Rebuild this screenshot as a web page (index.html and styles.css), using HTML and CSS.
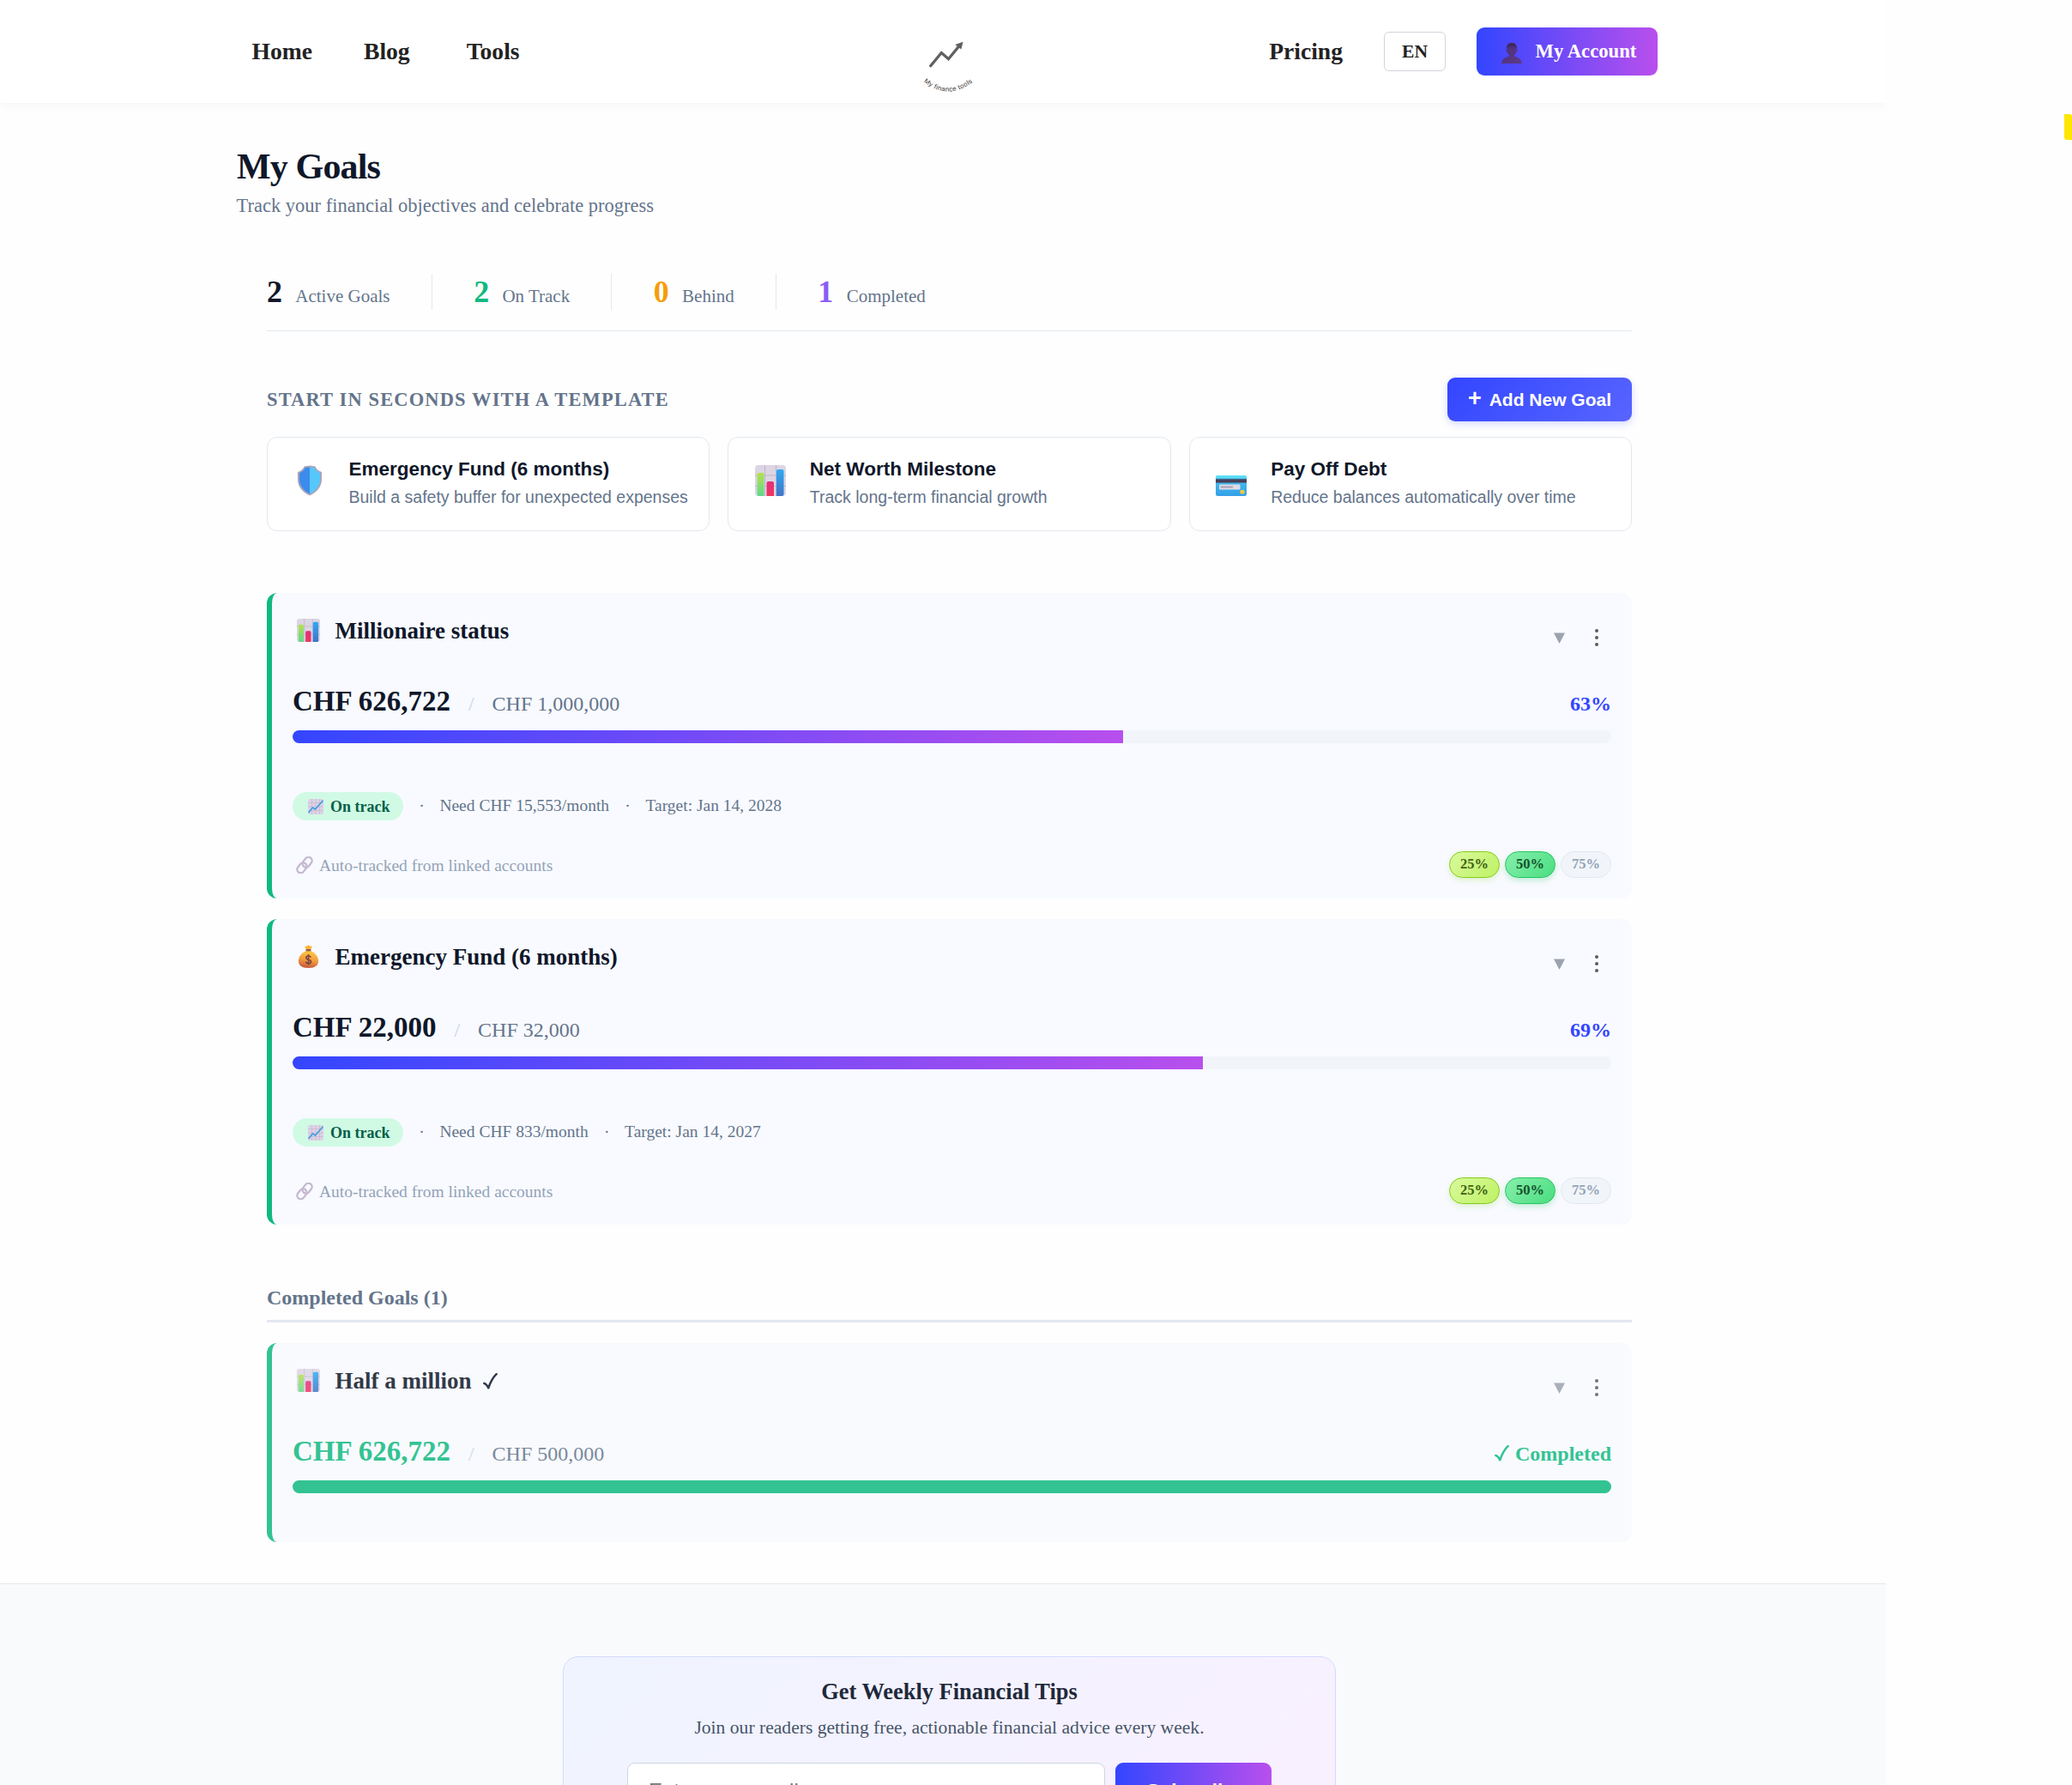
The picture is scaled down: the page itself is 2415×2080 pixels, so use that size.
FILE: index.html
```html
<!DOCTYPE html>
<html lang="en">
<head>
<meta charset="utf-8">
<title>My Goals</title>
<link rel="stylesheet" href="styles.css">
</head>
<body>
<svg class="sprite" width="0" height="0" aria-hidden="true">
  <defs>
    <linearGradient id="gGreen" x1="0" y1="0" x2="0" y2="1"><stop offset="0" stop-color="#b5e04d"/><stop offset="1" stop-color="#5fd98c"/></linearGradient>
    <linearGradient id="gPink" x1="0" y1="0" x2="0" y2="1"><stop offset="0" stop-color="#e0307c"/><stop offset="1" stop-color="#f0355f"/></linearGradient>
    <linearGradient id="gBlue" x1="0" y1="0" x2="0" y2="1"><stop offset="0" stop-color="#2fa9f5"/><stop offset="1" stop-color="#3f74c9"/></linearGradient>
    <linearGradient id="gCard" x1="0" y1="0" x2="0" y2="1"><stop offset="0" stop-color="#45c6ee"/><stop offset="1" stop-color="#359fe8"/></linearGradient>
    <linearGradient id="gBag" x1="0.6" y1="0" x2="0.4" y2="1"><stop offset="0" stop-color="#ffc943"/><stop offset="0.55" stop-color="#f0993f"/><stop offset="1" stop-color="#c4573c"/></linearGradient>
    <linearGradient id="gUser" x1="0" y1="0" x2="1" y2="1"><stop offset="0" stop-color="#4a2f7c"/><stop offset="1" stop-color="#5d3a86"/></linearGradient>
  </defs>
  <symbol id="i-chart" viewBox="0 0 36 36">
    <rect width="36" height="36" rx="4" fill="#dcd5e3"/>
    <path d="M11.5 0V36M24.5 0V36M0 12H36M0 24.5H36" stroke="#bfb6ca" stroke-width="1"/>
    <path d="M2.500 11a2 2 0 0 1 2-2h4a2 2 0 0 1 2 2V36H4.500a2 2 0 0 1-2-2Z" fill="url(#gGreen)"/>
    <path d="M13.500 21a2 2 0 0 1 2-2h4.500a2 2 0 0 1 2 2V36h-8.500Z" fill="url(#gPink)"/>
    <path d="M25 7a2 2 0 0 1 2-2h4.500a2 2 0 0 1 2 2V34a2 2 0 0 1-2 2H25Z" fill="url(#gBlue)"/>
  </symbol>
  <symbol id="i-shield" viewBox="0 0 30 36">
    <path d="M15 .5 8.500 1.500C7.500 4.500 4.500 7 1 8V17C1 25 7 32 15 35.500 23 32 29 25 29 17V8C25.500 7 22.500 4.500 21.500 1.500Z" fill="#a9a3bb"/>
    <path d="M15 2.800H9.800C8.500 6 6 8.300 3 9.300V17C3 24 8 30 15 33.500Z" fill="#3b8cec"/>
    <path d="M15 2.800H20.200C21.500 6 24 8.300 27 9.300V17C27 24 22 30 15 33.500Z" fill="#55c8fb"/>
  </symbol>
  <symbol id="i-card" viewBox="0 0 36 24">
    <rect width="36" height="24" rx="2.500" fill="url(#gCard)"/>
    <path d="M0 2.500A2.500 2.500 0 0 1 2.500 0h31A2.500 2.500 0 0 1 36 2.500V3H0Z" fill="#5bdcf3"/>
    <rect y="4.300" width="36" height="4.200" fill="#483f58"/>
    <rect x="4" y="10.500" width="24.500" height="6" rx="1" fill="#dfdae6"/>
    <rect x="5.500" y="12.500" width="14.500" height="2" fill="#aaa3b5"/>
    <rect x="28.500" y="17" width="5" height="4.500" rx="1" fill="#f5c63d"/>
  </symbol>
  <symbol id="i-bag" viewBox="0 0 24 27">
    <path d="M12 0 13.800 1.500 16.300 1.800 15.500 4 14.500 6.500H9.500L8.500 4 7.700 1.800 10.200 1.500Z" fill="#fbb53b"/>
    <path d="M9 7.200C4 9.500.4 13.700.4 18.800.4 24 4.200 27 12 27s11.600-3 11.600-8.200C23.600 13.700 20 9.500 15 7.200Z" fill="url(#gBag)"/>
    <rect x="9" y="5" width="6" height="2.600" rx="1" fill="#9a5f45"/>
    <path d="M14.800 14.600C14.400 13.300 13.300 12.900 12 12.900c-1.700 0-2.800.8-2.800 2.100 0 3 5.800 1.300 5.800 4.400 0 1.400-1.300 2.200-3 2.200-1.600 0-2.800-.7-3.100-2.100M12 11v12.400" fill="none" stroke="#7a4340" stroke-width="1.500"/>
  </symbol>
  <symbol id="i-trend" viewBox="0 0 18 18">
    <rect width="18" height="18" rx="2" fill="#dcd3e4"/>
    <path d="M4.500 0V18M9 0V18M13.500 0V18M0 4.500H18M0 9H18M0 13.500H18" stroke="#c6bad3" stroke-width=".8"/>
    <path d="M1 15.500 5.300 10 8.500 12 17 2.200" fill="none" stroke="#3f9be0" stroke-width="1.600" stroke-linejoin="round" stroke-linecap="round"/>
  </symbol>
  <symbol id="i-link" viewBox="0 0 20 20">
    <g fill="none" stroke="#c5b8cf" stroke-width="2.300">
      <rect x="8.900" y="0.300" width="8.400" height="12.800" rx="4.200" transform="rotate(38 13.100 6.700)"/>
      <rect x="2.700" y="6.900" width="8.400" height="12.800" rx="4.200" transform="rotate(38 6.900 13.300)"/>
    </g>
  </symbol>
  <symbol id="i-user" viewBox="0 0 24 24">
    <path d="M12 0c3.800 0 5.600 2.200 5.600 5.400v2.100c.9 0 1 .6.900 1.500-.1 1-.6 1.500-1.200 1.500-.4 1.700-1.300 3-2.300 3.800v1.200c3.800 1.100 8.400 2.700 9 8.500H0c.6-5.800 5.200-7.400 9-8.500v-1.200c-1-.8-1.900-2.100-2.300-3.800-.6 0-1.100-.5-1.200-1.500-.1-.9 0-1.500.9-1.500V5.400C6.400 2.200 8.200 0 12 0Z" fill="url(#gUser)"/>
    <path d="M6.400 7.500V5C6.400 1.700 8.600 0 12 0s5.600 1.700 5.600 5v2.500L16.500 4.500h-9Z" fill="#41295f"/>
  </symbol>
  <symbol id="i-check" viewBox="0 0 17 19">
    <path d="M1.300 12C3.200 12.300 4.800 14.500 6.300 17.300 8.500 11 11.500 5 15.600 1.200" fill="none" stroke="currentColor" stroke-width="2.500" stroke-linecap="round" stroke-linejoin="round"/>
  </symbol>
  <symbol id="i-down" viewBox="0 0 13 13"><path d="M0 .5H13L6.500 13Z" fill="#9ca3af"/></symbol>
  <symbol id="i-dots" viewBox="0 0 4 20"><g fill="#5c5c5c"><circle cx="2" cy="2" r="2"/><circle cx="2" cy="10" r="2"/><circle cx="2" cy="18" r="2"/></g></symbol>
</svg>

<header class="topbar">
  <nav class="nav-left"><a>Home</a><a>Blog</a><a>Tools</a></nav>
  <svg class="logo" viewBox="0 0 76 76" width="76" height="76">
    <path d="M15.700 36.700 28.300 21.500 36.500 28.700 49 13.500" fill="none" stroke="#606060" stroke-width="3.300" stroke-linecap="round"/>
    <path d="M53.500 8.800 51.300 17.500 44.300 11.900Z" fill="#606060"/>
    <path id="arc" d="M7.600 55Q36 79 67.500 53.500" fill="none"/>
    <text class="logo-text"><textPath href="#arc">My finance tools</textPath></text>
  </svg>
  <div class="nav-right">
    <a class="pricing">Pricing</a>
    <span class="lang">EN</span>
    <a class="account"><svg width="24" height="24"><use href="#i-user"/></svg><span>My Account</span></a>
  </div>
</header>

<main class="main">
  <h1>My Goals</h1>
  <p class="subtitle">Track your financial objectives and celebrate progress</p>

  <div class="content">
    <div class="stats">
      <div class="stat"><b>2</b><span>Active Goals</span></div>
      <i class="rule"></i>
      <div class="stat green"><b>2</b><span>On Track</span></div>
      <i class="rule"></i>
      <div class="stat amber"><b>0</b><span>Behind</span></div>
      <i class="rule"></i>
      <div class="stat violet"><b>1</b><span>Completed</span></div>
    </div>

    <div class="template-head">
      <h2>START IN SECONDS WITH A TEMPLATE</h2>
      <button class="add"><span class="plus">+</span>Add New Goal</button>
    </div>
    <div class="templates">
      <div class="template">
        <div class="template-icon"><svg width="30" height="36"><use href="#i-shield"/></svg></div>
        <div><h3>Emergency Fund (6 months)</h3><p>Build a safety buffer for unexpected expenses</p></div>
      </div>
      <div class="template">
        <div class="template-icon"><svg width="36" height="36"><use href="#i-chart"/></svg></div>
        <div><h3>Net Worth Milestone</h3><p>Track long-term financial growth</p></div>
      </div>
      <div class="template">
        <div class="template-icon low"><svg width="36" height="24"><use href="#i-card"/></svg></div>
        <div><h3>Pay Off Debt</h3><p>Reduce balances automatically over time</p></div>
      </div>
    </div>

    <div class="goals">
      <article class="goal">
        <div class="goal-head">
          <svg class="goal-icon" width="27" height="27"><use href="#i-chart"/></svg><h3>Millionaire status</h3>
          <div class="controls"><svg width="13" height="13"><use href="#i-down"/></svg><svg class="dots" width="4" height="20"><use href="#i-dots"/></svg></div>
        </div>
        <div class="amounts"><b>CHF 626,722</b><i>/</i><span>CHF 1,000,000</span><strong>63%</strong></div>
        <div class="track"><div class="fill" style="width:63%"></div></div>
        <div class="meta"><span class="badge"><svg width="18" height="18"><use href="#i-trend"/></svg>On track</span><i>·</i><span>Need CHF 15,553/month</span><i>·</i><span>Target: Jan 14, 2028</span></div>
        <div class="goal-foot">
          <span class="auto"><svg width="20" height="20"><use href="#i-link"/></svg>Auto-tracked from linked accounts</span>
          <div class="pills"><span class="pill p25">25%</span><span class="pill p50">50%</span><span class="pill">75%</span></div>
        </div>
      </article>

      <article class="goal">
        <div class="goal-head">
          <svg class="goal-icon" width="27" height="27"><use href="#i-bag"/></svg><h3>Emergency Fund (6 months)</h3>
          <div class="controls"><svg width="13" height="13"><use href="#i-down"/></svg><svg class="dots" width="4" height="20"><use href="#i-dots"/></svg></div>
        </div>
        <div class="amounts"><b>CHF 22,000</b><i>/</i><span>CHF 32,000</span><strong>69%</strong></div>
        <div class="track"><div class="fill" style="width:69%"></div></div>
        <div class="meta"><span class="badge"><svg width="18" height="18"><use href="#i-trend"/></svg>On track</span><i>·</i><span>Need CHF 833/month</span><i>·</i><span>Target: Jan 14, 2027</span></div>
        <div class="goal-foot">
          <span class="auto"><svg width="20" height="20"><use href="#i-link"/></svg>Auto-tracked from linked accounts</span>
          <div class="pills"><span class="pill p25">25%</span><span class="pill p50">50%</span><span class="pill">75%</span></div>
        </div>
      </article>
    </div>

    <h2 class="completed-title">Completed Goals (1)</h2>
    <article class="goal done">
      <div class="goal-head">
        <svg class="goal-icon" width="27" height="27"><use href="#i-chart"/></svg><h3>Half a million</h3><svg class="title-check" width="17" height="19"><use href="#i-check"/></svg>
        <div class="controls"><svg width="13" height="13"><use href="#i-down"/></svg><svg class="dots" width="4" height="20"><use href="#i-dots"/></svg></div>
      </div>
      <div class="amounts"><b>CHF 626,722</b><i>/</i><span>CHF 500,000</span><strong><svg width="17" height="19"><use href="#i-check"/></svg>Completed</strong></div>
      <div class="track"><div class="fill" style="width:100%"></div></div>
    </article>
  </div>
</main>

<footer class="footer">
  <section class="newsletter">
    <h3>Get Weekly Financial Tips</h3>
    <p>Join our readers getting free, actionable financial advice every week.</p>
    <form class="signup"><input type="email" placeholder="Enter your email"><button type="button">Subscribe</button></form>
  </section>
</footer>
<div class="side-tab"></div>
</body>
</html>
```

FILE: styles.css
```css
* { box-sizing: border-box; }
body, h1, h2, h3, p { margin: 0; }
html { height: 2080px; overflow: hidden; }
body {
  position: relative;
  width: 2415px;
  height: 2080px;
  overflow: hidden;
  background: #fefefe;
  font-family: "Liberation Serif", "Times New Roman", serif;
}
svg { display: block; flex: none; overflow: visible; }
.sprite { position: absolute; }

/* Top bar */
.topbar {
  width: 2198px;
  height: 120px;
  padding: 0 266px 0 281px;
  display: grid;
  grid-template-columns: 1fr auto 1fr;
  align-items: center;
  background: #fff;
  color: #222;
  font-weight: bold;
  font-size: 27.6px;
  box-shadow: 0 3px 12px rgba(0, 0, 0, .04);
  clip-path: inset(0 0 -30px 0);
}
.nav-left { display: flex; padding-left: 12.500px; }
.nav-left a + a { margin-left: 60px; }
.nav-left a + a + a { margin-left: 66px; }
.logo { margin-top: 36px; }
.logo-text { font: 7.800px "Liberation Sans", Arial, sans-serif; letter-spacing: .4px; fill: #333; }
.nav-right { display: flex; justify-content: flex-end; align-items: center; }
.lang {
  width: 72px;
  height: 46px;
  margin: 0 36px 0 48px;
  border: 1px solid #d1d5db;
  border-radius: 6px;
  font-size: 21.600px;
  line-height: 44px;
  text-align: center;
}
.account {
  width: 211px;
  height: 56px;
  padding-left: 28.500px;
  display: flex;
  align-items: center;
  gap: 16px;
  border-radius: 9px;
  background: linear-gradient(90deg, #3346ff, #b94fed);
  color: #fff;
  font-size: 22.700px;
}
.account svg { margin-top: 3px; }

/* Page head */
.main { width: 1902px; padding: 49px 0 0 276px; }
h1 { font-size: 42px; line-height: 50px; letter-spacing: -.02em; color: #0f172a; }
.subtitle { margin: 4px 0 0 -.5px; font-size: 22.500px; line-height: 34px; color: #64748b; }
.content { padding: 62px 0 0 35px; }

/* Stats */
.stats {
  display: flex;
  gap: 48.300px;
  padding-bottom: 24px;
  border-bottom: 1px solid #e2e8f0;
}
.stat { display: flex; align-items: baseline; gap: 15.300px; height: 42px; color: #0f172a; }
.stat b { font-size: 36px; line-height: 42px; }
.stat span { font-size: 21px; line-height: 24px; color: #64748b; }
.green { color: #10b981; }
.amber { color: #f59e0b; }
.violet { color: #8b5cf6; }
.rule { width: 1px; height: 42px; background: #e2e8f0; }

/* Templates */
.template-head {
  display: flex;
  justify-content: space-between;
  align-items: center;
  height: 51px;
  margin: 54px 0 18px;
}
.template-head h2 { font-size: 22.500px; letter-spacing: .05em; color: #64748b; }
.add {
  width: 215px;
  height: 51px;
  padding: 0;
  display: flex;
  align-items: center;
  justify-content: center;
  gap: 9px;
  border: 0;
  border-radius: 9px;
  background: linear-gradient(135deg, #3346ff, #5865ff);
  box-shadow: 0 3px 9px rgba(51, 70, 255, .2);
  color: #fff;
  font: bold 21px "Liberation Sans", Arial, sans-serif;
}
.plus { font-size: 27px; line-height: 30px; margin-top: -3px; }
.templates { display: grid; grid-template-columns: repeat(3, 1fr); gap: 21px; }
.template {
  display: flex;
  align-items: center;
  height: 110px;
  padding: 0 0 8px 26px;
  border: 1px solid #e2e8f0;
  border-radius: 12px;
  background: #fff;
  font-family: "Liberation Sans", Arial, sans-serif;
}
.template-icon { width: 45px; margin-right: 23.500px; display: flex; justify-content: center; }
.template-icon.low { padding-top: 12px; }
.template h3 { font-size: 22.500px; line-height: 28px; color: #0f172a; }
.template p { margin-top: 6px; font-size: 19.500px; line-height: 24px; color: #64748b; }
.template > div:last-child { padding-top: 3px; }

/* Goal cards */
.goals { display: flex; flex-direction: column; gap: 24px; margin-top: 72px; }
.goal {
  height: 356px;
  padding: 28px 24px 24px;
  border-left: 6px solid #10b981;
  border-radius: 12px;
  background: #f8faff;
}
.goal-head { display: flex; align-items: center; height: 32px; }
.goal-icon { margin: -1px 17.600px 0 5px; }
.goal-head h3 { font-size: 27px; line-height: 32px; color: #0f172a; }
.title-check { margin-left: 13px; color: #0f172a; }
.controls { display: flex; align-items: center; gap: 35px; margin: 17px 15px 0 auto; }
.dots { margin-top: -2px; }
.amounts { display: flex; align-items: baseline; height: 38px; margin-top: 47px; font-size: 24px; color: #64748b; }
.amounts b { font-size: 33px; line-height: 38px; color: #0f172a; }
.amounts i { margin: 0 21px; font-style: normal; color: #cbd5e1; }
.amounts strong { margin-left: auto; color: #3346ff; }
.amounts strong svg { display: inline-block; vertical-align: -1px; margin-right: 7px; }
.track { height: 15px; margin-top: 15px; border-radius: 7.500px; background: #f1f5f9; overflow: hidden; }
.fill { height: 100%; background: linear-gradient(135deg, #3346ff, #b94fed); }
.meta {
  display: flex;
  align-items: center;
  gap: 18.200px;
  height: 33px;
  margin-top: 57px;
  font-size: 19.500px;
  line-height: 31px;
  color: #64748b;
}
.meta > :not(.badge) { padding-bottom: 2px; }
.meta i { width: 6px; font-style: normal; text-align: center; }
.badge {
  display: flex;
  align-items: center;
  gap: 8px;
  width: 129px;
  height: 33px;
  padding: 1px 0 0 18px;
  border-radius: 17px;
  background: #d1fae5;
  color: #065f46;
  font-size: 18px;
  font-weight: bold;
}
.goal-foot { display: flex; justify-content: space-between; align-items: center; height: 31px; margin-top: 36px; }
.auto { display: flex; align-items: center; gap: 7px; padding: 3px 0 0 4px; font-size: 19.500px; color: #94a3b8; }
.auto svg { margin-top: -3px; }
.pills { display: flex; gap: 6px; }
.pill {
  width: 59px;
  height: 31px;
  border: 1px solid #e2e8f0;
  border-radius: 16px;
  background: #f1f5f9;
  color: #94a3b8;
  font-size: 16.500px;
  font-weight: bold;
  line-height: 27px;
  text-align: center;
}
.p25 { background: linear-gradient(135deg, #d9f99d, #bef264); border-color: #84cc16; color: #3f6212; box-shadow: 0 3px 6px rgba(132, 204, 22, .2); }
.p50 { background: linear-gradient(135deg, #86efac, #4ade80); border-color: #22c55e; color: #14532d; box-shadow: 0 3px 6px rgba(34, 197, 94, .25); }

/* Completed */
.completed-title {
  margin: 71px 0 24px;
  padding-bottom: 12px;
  border-bottom: 3px solid #e2e8f0;
  font-size: 24px;
  line-height: 28px;
  color: #64748b;
}
.done { height: 232px; opacity: .85; }
.done .amounts b, .done .amounts strong { color: #10b981; }
.done .fill { background: #10b981; }

/* Footer */
.footer {
  width: 2198px;
  height: 300px;
  margin-top: 48px;
  padding: 84px 0 0 656px;
  border-top: 1px solid #e5e7eb;
  background: #f8fafc;
}
.newsletter {
  width: 901px;
  height: 240px;
  padding: 24px 74px 0;
  border: 1px solid #d4daff;
  border-radius: 18px;
  background: linear-gradient(135deg, #eff4ff, #faf0ff);
  text-align: center;
}
.newsletter h3 { font-size: 26.400px; line-height: 32px; color: #1e293b; }
.newsletter p { margin-top: 12px; font-size: 21.600px; line-height: 28px; color: #475569; }
.signup { display: flex; gap: 12px; margin-top: 27px; }
.signup input {
  width: 557px;
  height: 66px;
  padding: 0 24px;
  border: 1px solid #cbd5e1;
  border-radius: 9px;
  background: #fff;
  font: 24px "Liberation Sans", Arial, sans-serif;
}
.signup button {
  width: 182px;
  height: 66px;
  border: 0;
  border-radius: 9px;
  background: linear-gradient(90deg, #3346ff, #b94fed);
  color: #fff;
  font: bold 22.500px "Liberation Sans", Arial, sans-serif;
}

/* Tab docked to the window's right edge */
.side-tab {
  position: absolute;
  top: 133px;
  right: 0;
  width: 9px;
  height: 30px;
  border-radius: 0 3px 0 3px;
  background: #ffe600;
}
```
